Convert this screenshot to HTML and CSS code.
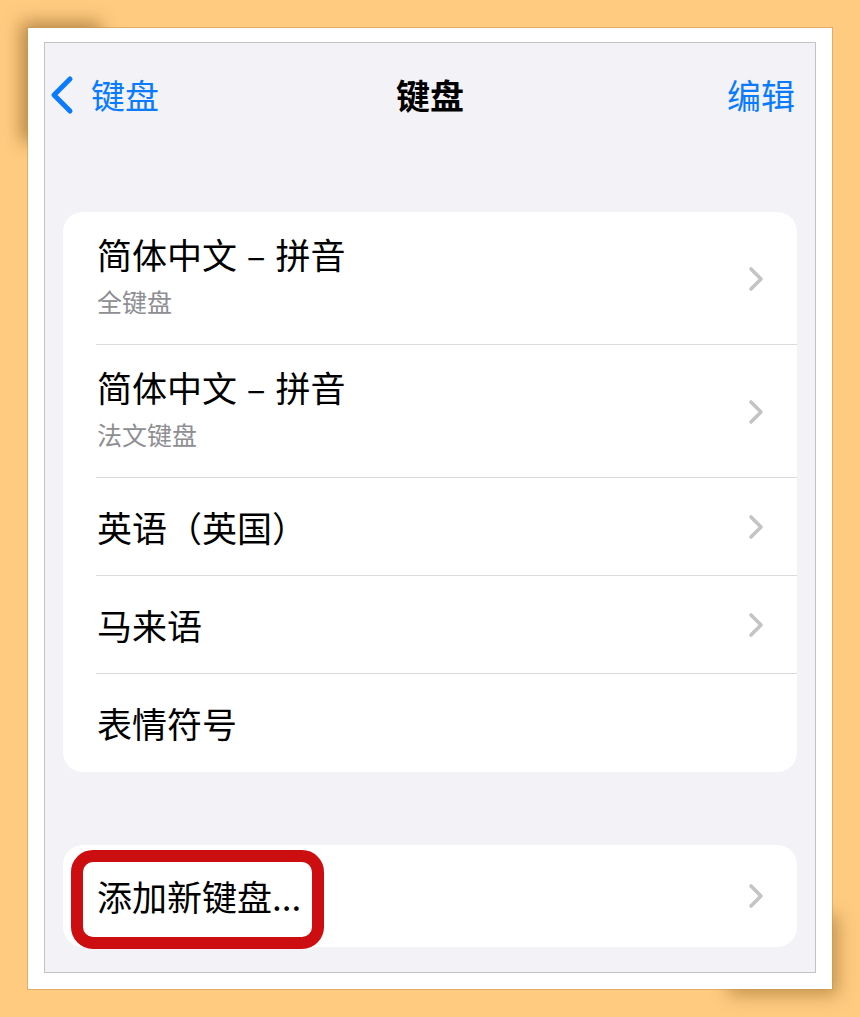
FILE: index.html
```html
<!DOCTYPE html>
<html lang="zh-CN">
<head>
<meta charset="utf-8">
<title>键盘</title>
<link rel="stylesheet" href="styles.css">
</head>
<body>
<div class="frame">
  <div class="screen">
    <div class="nav">
      <div class="nav-left">
        <svg class="back-icon" width="26" height="40" viewBox="0 0 26 40" aria-hidden="true">
          <path d="M21 4 L5 20 L21 36" fill="none" stroke="#0A7BFF" stroke-width="5" stroke-linecap="round" stroke-linejoin="round"/>
        </svg>
        <span class="nav-link">键盘</span>
      </div>
      <div class="nav-title">键盘</div>
      <div class="nav-right"><span class="nav-link">编辑</span></div>
    </div>

    <div class="card">
      <div class="row row-tall">
        <div class="row-text">
          <div class="row-title">简体中文 – 拼音</div>
          <div class="row-sub">全键盘</div>
        </div>
        <svg class="chev" width="16" height="26" viewBox="0 0 16 26" aria-hidden="true"><path d="M3 3 L13 13 L3 23" fill="none" stroke="#C4C4C7" stroke-width="3.6" stroke-linecap="round" stroke-linejoin="round"/></svg>
      </div>
      <div class="row row-tall">
        <div class="row-text">
          <div class="row-title">简体中文 – 拼音</div>
          <div class="row-sub">法文键盘</div>
        </div>
        <svg class="chev" width="16" height="26" viewBox="0 0 16 26" aria-hidden="true"><path d="M3 3 L13 13 L3 23" fill="none" stroke="#C4C4C7" stroke-width="3.6" stroke-linecap="round" stroke-linejoin="round"/></svg>
      </div>
      <div class="row">
        <div class="row-text"><div class="row-title">英语（英国）</div></div>
        <svg class="chev" width="16" height="26" viewBox="0 0 16 26" aria-hidden="true"><path d="M3 3 L13 13 L3 23" fill="none" stroke="#C4C4C7" stroke-width="3.6" stroke-linecap="round" stroke-linejoin="round"/></svg>
      </div>
      <div class="row">
        <div class="row-text"><div class="row-title">马来语</div></div>
        <svg class="chev" width="16" height="26" viewBox="0 0 16 26" aria-hidden="true"><path d="M3 3 L13 13 L3 23" fill="none" stroke="#C4C4C7" stroke-width="3.6" stroke-linecap="round" stroke-linejoin="round"/></svg>
      </div>
      <div class="row row-last">
        <div class="row-text"><div class="row-title">表情符号</div></div>
      </div>
    </div>

    <div class="card card-add">
      <div class="row row-add row-last">
        <div class="row-text"><div class="row-title">添加新键盘...</div></div>
        <svg class="chev" width="16" height="26" viewBox="0 0 16 26" aria-hidden="true"><path d="M3 3 L13 13 L3 23" fill="none" stroke="#C4C4C7" stroke-width="3.6" stroke-linecap="round" stroke-linejoin="round"/></svg>
      </div>
      <div class="highlight"></div>
    </div>
  </div>
</div>
</body>
</html>
```

FILE: styles.css
```css
html, body {
  margin: 0;
  padding: 0;
}
body {
  background: #FFCB80;
  width: 860px;
  height: 1017px;
  overflow: hidden;
  font-family: "Noto Sans CJK SC", "Noto Sans", sans-serif;
  color: #000;
}
.frame {
  position: relative;
  margin: 28px 0 0 28px;
  width: 804px;
  height: 961px;
  box-sizing: border-box;
  padding: 14px 16px 16px 16px;
  background: #fff;
  box-shadow: 0 0 0 1px rgba(200, 150, 80, 0.55);
}
.frame::before {
  content: "";
  position: absolute;
  left: -7px;
  top: -6px;
  width: 80px;
  height: 120px;
  background: rgba(110, 70, 10, 0.5);
  filter: blur(9px);
  z-index: -1;
}
.frame::after {
  content: "";
  position: absolute;
  right: -6px;
  bottom: -6px;
  width: 110px;
  height: 80px;
  background: rgba(110, 70, 10, 0.42);
  filter: blur(9px);
  z-index: -1;
}
.screen {
  width: 772px;
  height: 931px;
  box-sizing: border-box;
  border: 1px solid #C3C3C6;
  background: #F2F2F7;
  padding: 0 18px;
}
.nav {
  display: grid;
  grid-template-columns: 1fr auto 1fr;
  align-items: center;
  height: 104px;
  margin: 0 -18px;
  padding: 0 20px;
}
.nav-left {
  display: flex;
  align-items: center;
  gap: 16px;
  margin-left: -16px;
}
.back-icon {
  display: block;
}
.nav-link {
  color: #0A7BFF;
  font-size: 34px;
  line-height: 44px;
}
.nav-title {
  font-size: 34px;
  line-height: 44px;
  font-weight: 700;
}
.nav-right {
  text-align: right;
}
.card {
  margin-top: 65px;
  background: #fff;
  border-radius: 20px;
}
.card-add {
  position: relative;
  margin-top: 73px;
}
.row {
  display: flex;
  align-items: center;
  height: 98px;
  box-sizing: border-box;
  padding: 0 33px 0 34px;
  position: relative;
}
.row::after {
  content: "";
  position: absolute;
  left: 33px;
  right: 0;
  bottom: 0;
  height: 1px;
  background: #DADADE;
}
.row-last::after {
  display: none;
}
.row-tall {
  height: 133px;
  align-items: flex-start;
  padding-top: 20px;
}
.row-tall .chev {
  align-self: center;
  margin-top: -20px;
}
.row-add {
  height: 102px;
}
.row-text {
  flex: 1;
}
.row-title {
  font-size: 35px;
  line-height: 44px;
  word-spacing: 2px;
}
.row-sub {
  margin-top: 9px;
  font-size: 25px;
  line-height: 32px;
  color: #8E8E93;
}
.chev {
  display: block;
}
.highlight {
  position: absolute;
  left: 8px;
  top: 5px;
  width: 253px;
  height: 99px;
  box-sizing: border-box;
  border: 12px solid #CC0E10;
  border-radius: 22px;
}
```
